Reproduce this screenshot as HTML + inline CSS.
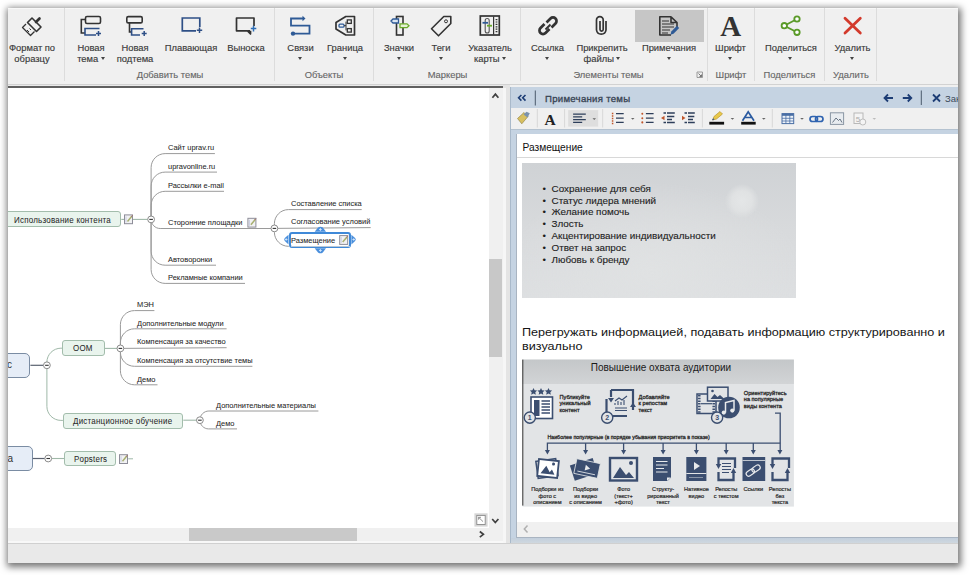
<!DOCTYPE html>
<html><head><meta charset="utf-8">
<style>
*{margin:0;padding:0;box-sizing:border-box}
html,body{width:970px;height:575px;overflow:hidden;background:#fff;font-family:"Liberation Sans",sans-serif}
.a{position:absolute}
#win{position:absolute;left:8px;top:8px;width:950px;height:555px;background:#f0f0f0;box-shadow:1px 2px 7px 2px rgba(0,0,0,.55);overflow:hidden}
.t{position:absolute;white-space:nowrap;line-height:1;text-align:center}
.rt{font-size:9.4px;color:#3a3a3a;-webkit-text-stroke:0.15px #3a3a3a}
.gl{font-size:9.4px;color:#666;-webkit-text-stroke:0.12px #666}
.sep{position:absolute;width:1px;background:#dcdcdc;height:73px}
.arr{position:absolute;width:0;height:0;border-left:2.5px solid transparent;border-right:2.5px solid transparent;border-top:3px solid #444}
svg{position:absolute;overflow:visible}
.mt{font-size:7.9px;color:#1e1e1e;transform:scaleX(0.945);transform-origin:0 0;-webkit-text-stroke:0.05px #1e1e1e}
.tt{font-size:8.4px;color:#2a2a2a;letter-spacing:0.25px;transform:scaleX(0.95);transform-origin:0 0;-webkit-text-stroke:0.05px #2a2a2a}
</style></head><body>
<div id="win"></div>
<div id="clip" style="position:absolute;left:0;top:0;width:970px;height:575px;clip-path:inset(8px 12px 12px 8px)">
<!-- RIBBON -->
<div class="a" style="left:8px;top:8px;width:950px;height:76px;background:#f0f0f0"></div>
<div class="a" style="left:8px;top:83.5px;width:950px;height:1px;background:#d2d2d2"></div>
<div class="a" style="left:8px;top:8px;width:950px;height:1.2px;background:#f8f8f8"></div>
<div class="sep" style="left:64px;top:8px"></div>
<div class="sep" style="left:274px;top:8px"></div>
<div class="sep" style="left:373px;top:8px"></div>
<div class="sep" style="left:520px;top:8px"></div>
<div class="sep" style="left:707px;top:8px"></div>
<div class="sep" style="left:754px;top:8px"></div>
<div class="sep" style="left:824px;top:8px"></div>
<div class="sep" style="left:876px;top:8px"></div>
<div class="a" style="left:635px;top:10px;width:69px;height:32px;background:#c6c6c6"></div>


<svg class="a" style="left:0;top:0" width="970" height="90" viewBox="0 0 970 90">
<!-- format painter -->
<g fill="none" stroke="#333" stroke-width="1.6" stroke-linejoin="round">
 <path d="M27.5 22.5 L32 18 L41 27 L36.5 31.5 Z"/>
 <path d="M26 24 L22.5 27.5 L30.5 35.5 L34.5 31.5" stroke-width="1.3"/>
</g>
<path d="M36 22 L39.5 18.5" stroke="#333" stroke-width="2.6" stroke-linecap="round"/>
<path d="M27 30 L29 32 M29.5 28.5 L31 30" stroke="#333" stroke-width="1"/>
<!-- new topic -->
<rect x="85.5" y="16.5" width="15" height="7" rx="1.5" fill="none" stroke="#333" stroke-width="1.6"/>
<path d="M85.5 19.5 H81.3 V33 H85" fill="none" stroke="#333" stroke-width="1.6"/>
<path d="M99.5 28.5 H85 V35 H96" fill="none" stroke="#2e4f86" stroke-width="1.6"/>
<path d="M98.5 31 V36 M96 33.5 H101" stroke="#2e4f86" stroke-width="1.5"/>
<!-- new subtopic -->
<rect x="126.8" y="16.6" width="15.4" height="6.3" rx="1.5" fill="none" stroke="#333" stroke-width="1.6"/>
<path d="M129.5 22.9 V32 H131.5" fill="none" stroke="#333" stroke-width="1.6"/>
<path d="M143.5 28.8 H131.6 V35 H140" fill="none" stroke="#2e4f86" stroke-width="1.6"/>
<path d="M144.2 31 V36 M141.7 33.5 H146.7" stroke="#2e4f86" stroke-width="1.5"/>
<!-- floating -->
<path d="M196 30.8 H182.3 V18 H199.8 V27" fill="none" stroke="#2e4f86" stroke-width="1.7"/>
<path d="M199.5 27.5 V33 M196.8 30.3 H202.2" stroke="#2e4f86" stroke-width="1.5"/>
<!-- callout -->
<path d="M250 30.8 H247.5 L250.5 34 V30.8 M247 30.8 H236.5 V18 H254 V26" fill="none" stroke="#333" stroke-width="1.7" stroke-linejoin="round"/>
<path d="M253.5 25.8 V31.5 M250.8 28.6 H256.3" stroke="#2e6fb8" stroke-width="1.5"/>
<!-- relationships -->
<g fill="none" stroke="#2e5a96" stroke-width="1.8">
<path d="M303 18.5 H291 V25.7 H309.5 V33.6 H293"/>
</g>
<path d="M302.5 15.8 L305.5 18.5 L302.5 21.2 Z" fill="#2e5a96"/>
<circle cx="293" cy="33.6" r="2.2" fill="#2e5a96"/>
<!-- boundary -->
<path d="M345.8 16.5 H354.5 V35 H345.8 L336 29 V22.5 Z" fill="none" stroke="#333" stroke-width="1.7" stroke-linejoin="round"/>
<rect x="339" y="24.2" width="5" height="3" rx="1" fill="none" stroke="#2e5a96" stroke-width="1.3"/>
<rect x="347.3" y="19.9" width="4" height="3.5" fill="none" stroke="#333" stroke-width="1.3"/>
<rect x="347.3" y="28.6" width="4" height="3.5" fill="none" stroke="#333" stroke-width="1.3"/>
<path d="M344 25.7 H346 M346 21.6 V30.4" stroke="#333" stroke-width="1"/>
<!-- icons (markers) -->
<rect x="396.5" y="16.5" width="6.5" height="18.5" fill="none" stroke="#333" stroke-width="1.6"/>
<path d="M391 21 L393 19 H398.5 V23 H393 Z" fill="#dbe6f3" stroke="#2e5a96" stroke-width="1.3"/>
<path d="M400 23.8 H407 L409 25.7 L407 27.7 H400 Z" fill="#e7f2d5" stroke="#6aaa2a" stroke-width="1.3"/>
<!-- tags -->
<path d="M443.8 16.5 H450.8 V23.5 L438.5 35.8 L431.5 28.8 Z" fill="none" stroke="#333" stroke-width="1.6" stroke-linejoin="round"/>
<circle cx="446" cy="21.3" r="1.5" fill="none" stroke="#333" stroke-width="1"/>
<!-- map index -->
<rect x="480.3" y="16" width="19" height="19" fill="none" stroke="#333" stroke-width="1.7"/>
<path d="M493.6 16.5 V34.5" stroke="#333" stroke-width="1.2"/>
<path d="M496.5 19 V33" stroke="#333" stroke-width="1.8" stroke-dasharray="1.2 1.2"/>
<rect x="485.2" y="18.5" width="4" height="14.5" rx="2" fill="none" stroke="#555" stroke-width="1.1"/>
<path d="M482.5 22.8 H488" stroke="#2e5a96" stroke-width="1.8"/>
<path d="M487 25.7 H492" stroke="#6aaa2a" stroke-width="1.8"/>
<!-- link -->
<g fill="none" stroke="#333" stroke-width="2.7">
<path d="M546.5 22.5 L550.5 18.5 A2.9 2.9 0 0 1 555.5 23.5 L551.5 27.5"/>
<path d="M549.5 29 L545.5 33 A2.9 2.9 0 0 1 540.5 28 L544.5 24"/>
<path d="M545.5 29.5 L550.5 24.5" stroke-width="2"/>
</g>
<!-- paperclip -->
<path d="M606 21 V30 A4.8 4.8 0 0 1 596.5 30 V20 A3.3 3.3 0 0 1 603.2 20 V29.5 A1.5 1.5 0 0 1 600 29.5 V21" fill="none" stroke="#333" stroke-width="1.7"/>
<!-- notes doc -->
<path d="M671 16.8 H659.8 V35 H671 M677 27 V22.5 L671 16.8 V22.5 H677" fill="none" stroke="#333" stroke-width="1.6" stroke-linejoin="round"/>
<path d="M662 21 H669 M662 24 H674 M662 27 H674 M662 30 H670 M662 33 H668" stroke="#333" stroke-width="1"/>
<path d="M670.5 34.8 L671.3 31.5 L677 25.8 L679.2 28 L673.5 33.7 Z" fill="#2e5a96"/>
<!-- font A -->
<text x="730.8" y="36.3" font-family="Liberation Serif" font-weight="bold" font-size="29" text-anchor="middle" fill="#333">A</text>
<!-- share -->
<g fill="#fff" stroke="#5a9a28" stroke-width="1.8">
<path d="M784.3 25.7 L797 19 M784.3 25.7 L797 32.3" fill="none"/>
<circle cx="784.3" cy="25.7" r="2.7"/>
<circle cx="797" cy="19" r="2.7"/>
<circle cx="797" cy="32.3" r="2.7"/>
</g>
<!-- delete -->
<path d="M845 18.3 L860.3 33 M860.3 18.3 L845 33" stroke="#d33a2c" stroke-width="2.8" stroke-linecap="round"/>
<!-- dialog launcher -->
<path d="M697 72 H702.5 V77.5 H697 Z" fill="none" stroke="#888" stroke-width="0.8"/>
<path d="M698.5 73.5 L701.5 76.5 M701.5 74.5 V76.5 H699.5" fill="none" stroke="#666" stroke-width="0.9"/>
</svg>

<!-- ribbon texts: centered at x -->
<div class="t rt" style="left:-18px;width:100px;top:43px">Формат по</div>
<div class="t rt" style="left:-18px;width:100px;top:54px">образцу</div>
<div class="t rt" style="left:41px;width:100px;top:43px">Новая</div>
<div class="t rt" style="left:41px;width:100px;top:54px">тема <span style="display:inline-block;width:0;height:0;border-left:2.5px solid transparent;border-right:2.5px solid transparent;border-top:3px solid #444;vertical-align:2px"></span></div>
<div class="t rt" style="left:85px;width:100px;top:43px">Новая</div>
<div class="t rt" style="left:85px;width:100px;top:54px">подтема</div>
<div class="t rt" style="left:141px;width:100px;top:43px">Плавающая</div>
<div class="t rt" style="left:196px;width:100px;top:43px">Выноска</div>
<div class="t rt" style="left:250.5px;width:100px;top:43px">Связи</div>
<div class="arr" style="left:297.5px;top:57px"></div>
<div class="t rt" style="left:295px;width:100px;top:43px">Граница</div>
<div class="arr" style="left:342.5px;top:57px"></div>
<div class="t rt" style="left:349px;width:100px;top:43px">Значки</div>
<div class="arr" style="left:397px;top:57px"></div>
<div class="t rt" style="left:391px;width:100px;top:43px">Теги</div>
<div class="arr" style="left:438.5px;top:57px"></div>
<div class="t rt" style="left:440px;width:100px;top:43px">Указатель</div>
<div class="t rt" style="left:440px;width:100px;top:54px">карты <span style="display:inline-block;width:0;height:0;border-left:2.5px solid transparent;border-right:2.5px solid transparent;border-top:3px solid #444;vertical-align:2px"></span></div>
<div class="t rt" style="left:497.5px;width:100px;top:43px">Ссылка</div>
<div class="arr" style="left:545px;top:57px"></div>
<div class="t rt" style="left:552px;width:100px;top:43px">Прикрепить</div>
<div class="t rt" style="left:552px;width:100px;top:54px">файлы <span style="display:inline-block;width:0;height:0;border-left:2.5px solid transparent;border-right:2.5px solid transparent;border-top:3px solid #444;vertical-align:2px"></span></div>
<div class="t rt" style="left:619px;width:100px;top:43px">Примечания</div>
<div class="arr" style="left:666.5px;top:57px"></div>
<div class="t rt" style="left:680.5px;width:100px;top:43px">Шрифт</div>
<div class="arr" style="left:728px;top:57px"></div>
<div class="t rt" style="left:741px;width:100px;top:43px">Поделиться</div>
<div class="arr" style="left:788px;top:57px"></div>
<div class="t rt" style="left:802.5px;width:100px;top:43px">Удалить</div>
<div class="arr" style="left:850px;top:57px"></div>

<div class="t gl" style="left:120px;width:100px;top:69.8px">Добавить темы</div>
<div class="t gl" style="left:274px;width:100px;top:69.8px">Объекты</div>
<div class="t gl" style="left:397.5px;width:100px;top:69.8px">Маркеры</div>
<div class="t gl" style="left:558.5px;width:100px;top:69.8px">Элементы темы</div>
<div class="t gl" style="left:681px;width:100px;top:69.8px">Шрифт</div>
<div class="t gl" style="left:739.5px;width:100px;top:69.8px">Поделиться</div>
<div class="t gl" style="left:801px;width:100px;top:69.8px">Удалить</div>

<!-- CANVAS -->
<div class="a" style="left:8px;top:85px;width:495px;height:2px;background:#eaeaea"></div>
<div class="a" style="left:8px;top:86.3px;width:495px;height:1.3px;background:#606060"></div>
<div class="a" style="left:8px;top:87.5px;width:481px;height:441px;background:#fff"></div>
<div class="a" style="left:489px;top:87.5px;width:14px;height:455px;background:#f0f0f0"></div>
<div class="a" style="left:8px;top:528px;width:481px;height:14px;background:#f0f0f0"></div>
<div class="a" style="left:189px;top:528.2px;width:168px;height:12.6px;background:#c9c9c9"></div>
<div class="a" style="left:8px;top:541px;width:495px;height:1.5px;background:#f8f8f8"></div>
<div class="a" style="left:503px;top:85px;width:7px;height:458px;background:#e4e4e4"></div>
<div class="a" style="left:503px;top:87.5px;width:3px;height:455px;background:#f6f6f6"></div>
<div class="a" style="left:489px;top:259.2px;width:13px;height:98.3px;background:#c8c8c8"></div>
<svg class="a" style="left:0;top:0" width="970" height="575" viewBox="0 0 970 575">
<path d="M492.4 97.8 L495.4 94.2 L498.4 97.8" fill="none" stroke="#404040" stroke-width="1.7"/>
<path d="M492.2 519 L495.3 522.5 L498.4 519" fill="none" stroke="#404040" stroke-width="1.7"/>
<path d="M479.8 531.5 L483.4 534.3 L479.8 537.1" fill="none" stroke="#404040" stroke-width="1.7"/>
<rect x="474.4" y="513.3" width="13.2" height="13.3" fill="#d6d6d6"/>
<rect x="476.8" y="515.4" width="8.4" height="9.1" fill="#fff" stroke="#8a8a8a" stroke-width="0.9"/>
<path d="M478.6 517.3 L483 521.6 M478.6 517.3 H481 M478.6 517.3 V519.7" fill="none" stroke="#777" stroke-width="0.8"/>
</svg>
<!--MAP-->
<div class="a" style="left:8px;top:87.5px;width:481px;height:440.5px;overflow:hidden">
<div class="a" style="left:-8px;top:-87.5px;width:970px;height:575px">
<div class="a" style="left:-20px;top:211.1px;width:141.3px;height:16px;background:#e9f4ed;border:1px solid #a3bdac;border-radius:3px"></div>
<div class="a" style="left:62.3px;top:339.9px;width:42.7px;height:16.1px;background:#e9f4ed;border:1px solid #a3bdac;border-radius:3px"></div>
<div class="a" style="left:62.9px;top:413.3px;width:120.4px;height:15.6px;background:#e9f4ed;border:1px solid #a3bdac;border-radius:3px"></div>
<div class="a" style="left:64.1px;top:451.1px;width:52.3px;height:14.9px;background:#e9f4ed;border:1px solid #a3bdac;border-radius:3px"></div>
<div class="a" style="left:-20px;top:352.5px;width:50.4px;height:25px;background:#e6edf7;border:1.3px solid #7a8ca3;border-radius:5px"></div>
<div class="a" style="left:-20px;top:446.2px;width:52.8px;height:24.5px;background:#e6edf7;border:1.3px solid #7a8ca3;border-radius:5px"></div>
<div class="a" style="left:288.5px;top:231.7px;width:62.9px;height:16.5px;background:#fff;border:2.2px solid #3f89d8;border-radius:3px"></div>
<div class="a" style="left:290.5px;top:246px;width:59px;height:0.8px;background:#b8c8d8"></div>
<svg class="a" style="left:0;top:0" width="970" height="575" viewBox="0 0 970 575">
<path d="M151.1 219.4 L151.1 167.6 C151.1 159.9 157.4 153.6 165.1 153.6 L214.9 153.6" stroke="#9a9a9a" stroke-width="1" fill="none"/>
<path d="M151.1 219.4 L151.1 186.1 C151.1 178.4 157.4 172.1 165.1 172.1 L217.0 172.1" stroke="#9a9a9a" stroke-width="1" fill="none"/>
<path d="M151.1 219.4 L151.1 205.3 C151.1 197.60000000000002 157.4 191.3 165.1 191.3 L224.0 191.3" stroke="#9a9a9a" stroke-width="1" fill="none"/>
<path d="M151.1 219.4 L151.1 219.4 C151.1 224.405 155.195 228.5 160.2 228.5 L271.0 228.5" stroke="#9a9a9a" stroke-width="1" fill="none"/>
<path d="M151.1 219.4 L151.1 251.2 C151.1 258.9 157.4 265.2 165.1 265.2 L216.0 265.2" stroke="#9a9a9a" stroke-width="1" fill="none"/>
<path d="M151.1 219.4 L151.1 269.4 C151.1 277.09999999999997 157.4 283.4 165.1 283.4 L245.0 283.4" stroke="#9a9a9a" stroke-width="1" fill="none"/>
<path d="M274.4 228.4 L274.4 223.6 C274.4 215.9 280.7 209.6 288.4 209.6 L361.7 209.6" stroke="#9a9a9a" stroke-width="1" fill="none"/>
<path d="M274.4 228.4 L370.7 227.6" stroke="#9a9a9a" stroke-width="1" fill="none"/>
<path d="M274.4 228.4 L274.4 232.3 C274.4 240.0 280.7 246.3 288.4 246.3 L289 246.3" stroke="#9a9a9a" stroke-width="1" fill="none"/>
<path d="M46.9 365.3 L46.9 362.2 C46.9 354.5 53.199999999999996 348.2 60.9 348.2 L62.3 348.2" stroke="#9fb8a8" stroke-width="1" fill="none"/>
<path d="M46.9 365.3 L46.9 406.4 C46.9 414.09999999999997 53.199999999999996 420.4 60.9 420.4 L62.9 420.4" stroke="#9fb8a8" stroke-width="1" fill="none"/>
<path d="M120.4 348.4 L120.4 324.6 C120.4 316.90000000000003 126.7 310.6 134.4 310.6 L154.4 310.6" stroke="#9a9a9a" stroke-width="1" fill="none"/>
<path d="M120.4 348.4 L120.4 342.8 C120.4 335.1 126.7 328.8 134.4 328.8 L226.6 328.8" stroke="#9a9a9a" stroke-width="1" fill="none"/>
<path d="M120.4 348.4 L226.6 347.7" stroke="#9a9a9a" stroke-width="1" fill="none"/>
<path d="M120.4 348.4 L120.4 352.3 C120.4 360.0 126.7 366.3 134.4 366.3 L252.4 366.3" stroke="#9a9a9a" stroke-width="1" fill="none"/>
<path d="M120.4 348.4 L120.4 370.8 C120.4 378.5 126.7 384.8 134.4 384.8 L157.5 384.8" stroke="#9a9a9a" stroke-width="1" fill="none"/>
<path d="M199.9 420.2 L199.9 420.0 C199.9 415.05 203.95000000000002 411.0 208.9 411.0 L318.4 411.0" stroke="#9a9a9a" stroke-width="1" fill="none"/>
<path d="M199.9 420.2 L199.9 420.2 C199.9 424.98499999999996 203.815 428.9 208.6 428.9 L237.0 428.9" stroke="#9a9a9a" stroke-width="1" fill="none"/>
<path d="M121.3 219.4 H147.7" stroke="#9fb8a8" stroke-width="1.1" fill="none"/>
<path d="M30.4 365.3 H43.5" stroke="#5a6270" stroke-width="1.2" fill="none"/>
<path d="M105 348.4 H117" stroke="#9fb8a8" stroke-width="1.1" fill="none"/>
<path d="M183.3 420.2 H196.5" stroke="#9fb8a8" stroke-width="1.1" fill="none"/>
<path d="M32.8 458.5 H44.8" stroke="#5a6270" stroke-width="1.2" fill="none"/>
<path d="M51.6 458.5 H64.1" stroke="#9fb8a8" stroke-width="1.1" fill="none"/>
<path d="M128.2 458.8 H133" stroke="#9fb8a8" stroke-width="1" fill="none"/>
<circle cx="151.1" cy="219.4" r="3.4" fill="#fff" stroke="#8a8a8a" stroke-width="1"/><path d="M149.29999999999998 219.4 H152.9" stroke="#333" stroke-width="1.1"/>
<circle cx="274.4" cy="228.4" r="3.4" fill="#fff" stroke="#8a8a8a" stroke-width="1"/><path d="M272.59999999999997 228.4 H276.2" stroke="#333" stroke-width="1.1"/>
<circle cx="46.9" cy="365.3" r="3.4" fill="#fff" stroke="#8a8a8a" stroke-width="1"/><path d="M45.1 365.3 H48.699999999999996" stroke="#333" stroke-width="1.1"/>
<circle cx="120.4" cy="348.4" r="3.4" fill="#fff" stroke="#8a8a8a" stroke-width="1"/><path d="M118.60000000000001 348.4 H122.2" stroke="#333" stroke-width="1.1"/>
<circle cx="199.9" cy="420.2" r="3.4" fill="#fff" stroke="#8a8a8a" stroke-width="1"/><path d="M198.1 420.2 H201.70000000000002" stroke="#333" stroke-width="1.1"/>
<circle cx="48.2" cy="458.5" r="3.4" fill="#fff" stroke="#8a8a8a" stroke-width="1"/><path d="M46.400000000000006 458.5 H50.0" stroke="#333" stroke-width="1.1"/>
<g transform="translate(124 214.4)"><rect x="0.5" y="0.5" width="8" height="8.8" fill="#f2f2f4" stroke="#8d8d98" stroke-width="1"/><path d="M2 2 V8" stroke="#c8cce0" stroke-width="1"/><path d="M3.5 7 L7.8 1.8" stroke="#a8b070" stroke-width="1.5"/><path d="M7.3 2.3 L8.5 0.8" stroke="#a06a6a" stroke-width="1"/></g>
<g transform="translate(247.4 217.8)"><rect x="0.5" y="0.5" width="8" height="8.8" fill="#f2f2f4" stroke="#8d8d98" stroke-width="1"/><path d="M2 2 V8" stroke="#c8cce0" stroke-width="1"/><path d="M3.5 7 L7.8 1.8" stroke="#a8b070" stroke-width="1.5"/><path d="M7.3 2.3 L8.5 0.8" stroke="#a06a6a" stroke-width="1"/></g>
<g transform="translate(339.2 235.1)"><rect x="0.5" y="0.5" width="8" height="8.8" fill="#f2f2f4" stroke="#8d8d98" stroke-width="1"/><path d="M2 2 V8" stroke="#c8cce0" stroke-width="1"/><path d="M3.5 7 L7.8 1.8" stroke="#a8b070" stroke-width="1.5"/><path d="M7.3 2.3 L8.5 0.8" stroke="#a06a6a" stroke-width="1"/></g>
<g transform="translate(119 454.2)"><rect x="0.5" y="0.5" width="8" height="8.8" fill="#f2f2f4" stroke="#8d8d98" stroke-width="1"/><path d="M2 2 V8" stroke="#c8cce0" stroke-width="1"/><path d="M3.5 7 L7.8 1.8" stroke="#a8b070" stroke-width="1.5"/><path d="M7.3 2.3 L8.5 0.8" stroke="#a06a6a" stroke-width="1"/></g>
<path d="M314.7 231.7 L318 227.5 Q320.4 225.8 322.8 227.5 L326 231.7 Z" fill="#4a8fdc"/>
<path d="M314.7 248.2 L318 252.4 Q320.4 254.1 322.8 252.4 L326 248.2 Z" fill="#4a8fdc"/>
<path d="M288.5 234.7 L284.8 238 Q283.4 239.5 284.8 241 L288.5 244.4 Z" fill="#4a8fdc"/>
<path d="M351.4 234.7 L355.1 238 Q356.5 239.5 355.1 241 L351.4 244.4 Z" fill="#4a8fdc"/>
<path d="M320.4 228 V231 M319 229.5 H321.8 M320.4 249 V252 M319 250.5 H321.8 M286.2 238.2 V240.8 M284.9 239.5 H287.5 M353.7 238.2 V240.8 M352.4 239.5 H355 " stroke="#dcecff" stroke-width="0.8"/>
</svg>
<div class="t mt" style="left:168.2px;top:144.3px;text-align:left">Сайт uprav.ru</div>
<div class="t mt" style="left:168.2px;top:162.8px;text-align:left">upravonline.ru</div>
<div class="t mt" style="left:168.2px;top:182.0px;text-align:left">Рассылки e-mail</div>
<div class="t mt" style="left:168.2px;top:219.2px;text-align:left">Сторонние площадки</div>
<div class="t mt" style="left:168.2px;top:255.9px;text-align:left">Автоворонки</div>
<div class="t mt" style="left:168.2px;top:274.1px;text-align:left">Рекламные компании</div>
<div class="t mt" style="left:291.1px;top:200.3px;text-align:left">Составление списка</div>
<div class="t mt" style="left:291.1px;top:217.9px;text-align:left">Согласование условий</div>
<div class="t mt" style="left:136.9px;top:301.3px;text-align:left">МЭН</div>
<div class="t mt" style="left:136.9px;top:319.5px;text-align:left">Дополнительные модули</div>
<div class="t mt" style="left:136.9px;top:338.4px;text-align:left">Компенсация за качество</div>
<div class="t mt" style="left:136.9px;top:357.0px;text-align:left">Компенсация за отсутствие темы</div>
<div class="t mt" style="left:136.9px;top:375.5px;text-align:left">Демо</div>
<div class="t mt" style="left:216.3px;top:401.7px;text-align:left">Дополнительные материалы</div>
<div class="t mt" style="left:216.3px;top:419.6px;text-align:left">Демо</div>
<div class="t tt" style="left:13.5px;top:215.8px;text-align:left">Использование контента</div>
<div class="t tt" style="left:73px;top:344.4px;text-align:left">ООМ</div>
<div class="t tt" style="left:72.7px;top:416.9px;text-align:left">Дистанционное обучение</div>
<div class="t tt" style="left:74px;top:454.6px;text-align:left">Popsters</div>
<div class="t" style="left:7px;top:360px;font-size:10px;color:#333;text-align:left">с</div>
<div class="t" style="left:3px;top:453.5px;font-size:10px;color:#333;text-align:left">ка</div>
<div class="t mt" style="left:291.4px;top:236.9px;text-align:left">Размещение</div>
</div></div>
<!--/MAP-->
<!-- status bar -->
<div class="a" style="left:8px;top:542.5px;width:950px;height:1px;background:#d0d0d0"></div>
<div class="a" style="left:8px;top:543.5px;width:950px;height:20px;background:#e9e9e9"></div>

<!-- NOTES PANEL -->
<div class="a" style="left:510px;top:87px;width:448px;height:456px;background:#c5d3e2"></div>
<div class="a" style="left:510px;top:87px;width:1px;height:456px;background:#a9b9ca"></div>
<div class="a" style="left:511px;top:108px;width:447px;height:21px;background:#f0f0f0"></div>
<div class="a" style="left:511px;top:128.5px;width:447px;height:1px;background:#b4c2d0"></div>
<div class="a" style="left:516.5px;top:134px;width:442px;height:403px;background:#fff"></div>
<div class="a" style="left:516.5px;top:522px;width:442px;height:15px;background:#f0f0f0"></div>
<div class="a" style="left:516px;top:134px;width:1px;height:403.5px;background:#a9b4c1"></div>
<div class="a" style="left:516px;top:536.6px;width:442px;height:1px;background:#a9b4c1"></div>
<div class="a" style="left:511px;top:537.6px;width:447px;height:5px;background:linear-gradient(#c2cfdc,#cfd7df)"></div>
<div class="t" style="left:545px;top:93.6px;font-size:9.6px;letter-spacing:0.28px;-webkit-text-stroke:0.35px #3a4656;color:#3a4656;text-align:left">Примечания темы</div>
<div class="t" style="left:522.5px;top:142.6px;font-size:10.2px;color:#111;text-align:left">Размещение</div>
<div class="a" style="left:516.5px;top:157px;width:442px;height:1px;background:#d8d8d8"></div>


<svg class="a" style="left:0;top:0" width="970" height="140" viewBox="0 0 970 140">
<!-- header -->
<path d="M527.5 525.5 L524.3 529 L527.5 532.5" fill="none" stroke="#b0b0b0" stroke-width="1.5"/>
<path d="M521.4 95 L518.6 97.8 L521.4 100.6 M525.5 95 L522.7 97.8 L525.5 100.6" fill="none" stroke="#1d3d75" stroke-width="1.6"/>
<path d="M535.3 90.5 V105.5" stroke="#4a5a6c" stroke-width="1"/>
<path d="M893 98 H884.5 M888 94.5 L884.5 98 L888 101.5" fill="none" stroke="#1d3d75" stroke-width="1.8"/>
<path d="M902.8 98 H911.3 M907.8 94.5 L911.3 98 L907.8 101.5" fill="none" stroke="#1d3d75" stroke-width="1.8"/>
<path d="M921.3 90.5 V105" stroke="#4a5a6c" stroke-width="1"/>
<path d="M933 94.5 L940 101.5 M940 94.5 L933 101.5" stroke="#1d3d75" stroke-width="1.8"/>
<!-- toolbar separators -->
<path d="M537.3 109 V127.5 M564.6 109 V127.5 M602.7 109 V127.5 M702.4 109 V127.5 M772.3 109 V127.5" stroke="#d8d8d8" stroke-width="1"/>
<!-- brush -->
<path d="M517.5 118.5 L524 112.5 L528 116.5 L521.8 123.8 Z" fill="#d8c060" stroke="#8a7a3a" stroke-width="0.6"/>
<path d="M523.5 114.5 L526.5 111.8 L529.8 113.2 L527.5 117.5 Z" fill="#7b93ad"/>
<!-- A -->
<text x="550" y="124.6" font-family="Liberation Serif" font-weight="bold" font-size="15.5" text-anchor="middle" fill="#222">A</text>
<!-- align highlight -->
<rect x="568.2" y="110.1" width="30" height="16.5" fill="#dedede"/>
<path d="M573.1 114.2 H585.8 M573.1 116.9 H582.2 M573.1 119.6 H585.8 M573.1 122.3 H582.2" stroke="#2d3e5a" stroke-width="1.2"/>
<path d="M592.5 118.3 L596 118.3 L594.25 120 Z" fill="#666"/>
<!-- numbered list -->
<path d="M612.6 112.8 V124.6" stroke="#c0552a" stroke-width="1.5" stroke-dasharray="1.4 1.1"/>
<path d="M616 113.7 H623.7 M616 118.2 H623.7 M616 122.3 H623.7" stroke="#2d3e5a" stroke-width="1.2"/>
<path d="M631 118 L634.5 118 L632.75 119.8 Z" fill="#666"/>
<!-- bullet list -->
<path d="M642.3 113.7 V113.8 M642.3 118.2 V118.3 M642.3 122.3 V122.4" stroke="#c0552a" stroke-width="2" stroke-linecap="round"/>
<path d="M645.9 113.7 H653.6 M645.9 118.2 H653.6 M645.9 122.3 H653.6" stroke="#2d3e5a" stroke-width="1.2"/>
<!-- outdent -->
<path d="M663.5 113 H666 M667 113 H674.8 M667 116.5 H674.3 M667 119.5 H672 M663.5 122.5 H666 M667 122.5 H674.8" stroke="#2d3e5a" stroke-width="1.3"/>
<path d="M661 118 L664.5 115.8 V120.2 Z" fill="#c0552a"/>
<!-- indent -->
<path d="M684.5 113 H687 M688 113 H694.8 M688 116.5 H694.3 M688 119.5 H693 M684.5 122.5 H687 M688 122.5 H694.8" stroke="#2d3e5a" stroke-width="1.3"/>
<path d="M685.5 118 L682 115.8 V120.2 Z" fill="#c0552a"/>
<!-- highlighter -->
<path d="M712.5 120 L714 116.5 L720 111.5 L722.5 114 L716.5 119 Z" fill="#e8c84a" stroke="#b08a20" stroke-width="0.6"/>
<path d="M712.5 120 L714 118.8" stroke="#3a5a90" stroke-width="1.2"/>
<rect x="709.3" y="121.8" width="14.8" height="2.8" fill="#111"/>
<path d="M730.6 118 L734.2 118 L732.4 119.8 Z" fill="#666"/>
<!-- font color -->
<path d="M742.5 120.8 L748.2 111.8 L754 120.8 M744.8 117.5 H751.7" fill="none" stroke="#2a5aa0" stroke-width="1.7"/>
<rect x="741.2" y="121.8" width="14.5" height="2.8" fill="#111"/>
<path d="M762 118 L765.6 118 L763.8 119.8 Z" fill="#666"/>
<!-- table -->
<rect x="782" y="113.6" width="11.7" height="10" fill="#eef3fa" stroke="#4a6fa5" stroke-width="1"/>
<rect x="782" y="113.6" width="11.7" height="2.2" fill="#4a6fa5"/>
<path d="M782 118.3 H793.7 M782 121 H793.7 M785.9 113.6 V123.6 M789.8 113.6 V123.6" stroke="#4a6fa5" stroke-width="0.8"/>
<path d="M800.2 118 L803.8 118 L802 119.8 Z" fill="#666"/>
<!-- link -->
<rect x="810" y="116.5" width="7.5" height="5" rx="2.5" fill="none" stroke="#2f63b0" stroke-width="1.7"/>
<rect x="815.5" y="116.5" width="7.5" height="5" rx="2.5" fill="none" stroke="#2f63b0" stroke-width="1.7"/>
<!-- image -->
<rect x="830.4" y="112.8" width="13.2" height="11.6" fill="#e8ecf0" stroke="#8a96a4" stroke-width="1"/>
<path d="M832.5 122.5 L836 118 L838.5 120.5 L840 119 L842 122.5" fill="none" stroke="#5a6878" stroke-width="0.9"/>
<!-- disabled -->
<rect x="854" y="113" width="9" height="10.5" fill="#f4f4f4" stroke="#b8b8b8" stroke-width="1"/>
<text x="858" y="121.5" font-family="Liberation Sans" font-size="8" text-anchor="middle" fill="#aaa">5</text>
<circle cx="862.8" cy="122" r="3" fill="#f4f4f4" stroke="#b8b8b8" stroke-width="0.9"/>
<path d="M872.5 118 L876.1 118 L874.3 119.8 Z" fill="#bbb"/>
</svg>

<div class="t" style="left:945px;top:94px;font-size:9.5px;color:#3e4b5b;text-align:left">Закрыть</div>
<!--NOTES-->
<div class="a" style="left:521.8px;top:162.8px;width:274.4px;height:135px;background:radial-gradient(circle at 220px 38px,#e4e6e7 0,#e0e2e3 10px,rgba(220,222,224,0) 17px),radial-gradient(ellipse 150px 90px at 130px 110px,#e0e2e3 0,rgba(224,226,227,0) 100%),linear-gradient(180deg,#cfd2d5 0,#d8dadc 50%,#dddfe1 100%)"></div>
<div class="t" style="left:542.6px;top:183.6px;font-size:9.9px;color:#1e1e1e;text-align:left">•</div>
<div class="t" style="left:551.5px;top:183.8px;font-size:9.9px;color:#222;-webkit-text-stroke:0.12px #222;text-align:left">Сохранение для себя</div>
<div class="t" style="left:542.6px;top:195.5px;font-size:9.9px;color:#1e1e1e;text-align:left">•</div>
<div class="t" style="left:551.5px;top:195.7px;font-size:9.9px;color:#222;-webkit-text-stroke:0.12px #222;text-align:left">Статус лидера мнений</div>
<div class="t" style="left:542.6px;top:207.2px;font-size:9.9px;color:#1e1e1e;text-align:left">•</div>
<div class="t" style="left:551.5px;top:207.4px;font-size:9.9px;color:#222;-webkit-text-stroke:0.12px #222;text-align:left">Желание помочь</div>
<div class="t" style="left:542.6px;top:219.2px;font-size:9.9px;color:#1e1e1e;text-align:left">•</div>
<div class="t" style="left:551.5px;top:219.4px;font-size:9.9px;color:#222;-webkit-text-stroke:0.12px #222;text-align:left">Злость</div>
<div class="t" style="left:542.6px;top:230.9px;font-size:9.9px;color:#1e1e1e;text-align:left">•</div>
<div class="t" style="left:551.5px;top:231.1px;font-size:9.9px;color:#222;-webkit-text-stroke:0.12px #222;text-align:left">Акцентирование индивидуальности</div>
<div class="t" style="left:542.6px;top:242.8px;font-size:9.9px;color:#1e1e1e;text-align:left">•</div>
<div class="t" style="left:551.5px;top:243.0px;font-size:9.9px;color:#222;-webkit-text-stroke:0.12px #222;text-align:left">Ответ на запрос</div>
<div class="t" style="left:542.6px;top:254.7px;font-size:9.9px;color:#1e1e1e;text-align:left">•</div>
<div class="t" style="left:551.5px;top:254.9px;font-size:9.9px;color:#222;-webkit-text-stroke:0.12px #222;text-align:left">Любовь к бренду</div>
<div class="t" style="left:521.8px;top:327.1px;font-size:10.6px;transform:scaleX(1.19);transform-origin:0 0;color:#151515;text-align:left">Перегружать информацией, подавать информацию структурированно и</div>
<div class="t" style="left:521.8px;top:340.6px;font-size:10.6px;transform:scaleX(1.19);transform-origin:0 0;color:#151515;text-align:left">визуально</div>
<svg class="a" style="left:0;top:0" width="970" height="575" viewBox="0 0 970 575">
<defs><linearGradient id="hb" x1="0" y1="0" x2="0" y2="1"><stop offset="0" stop-color="#c4c7c9"/><stop offset="1" stop-color="#d2d4d6"/></linearGradient></defs>
<rect x="522.5" y="359.6" width="271.4" height="147" fill="#e2e4e6"/>
<rect x="522.5" y="359.6" width="271.4" height="24.4" fill="url(#hb)"/>
<rect x="522.3" y="359.6" width="1" height="146" fill="#333"/>
<text x="590.8" y="370.8" font-family="Liberation Sans" font-size="10" fill="#1a1a1a">Повышение охвата аудитории</text>
<path d="M533.5 388 l1.1 2.3 2.5 .3 -1.8 1.7 .5 2.5 -2.3 -1.2 -2.3 1.2 .5 -2.5 -1.8 -1.7 2.5 -.3z" fill="#3b4e70"/>
<path d="M541 388 l1.1 2.3 2.5 .3 -1.8 1.7 .5 2.5 -2.3 -1.2 -2.3 1.2 .5 -2.5 -1.8 -1.7 2.5 -.3z" fill="#3b4e70"/>
<path d="M548.5 388 l1.1 2.3 2.5 .3 -1.8 1.7 .5 2.5 -2.3 -1.2 -2.3 1.2 .5 -2.5 -1.8 -1.7 2.5 -.3z" fill="#3b4e70"/>
<rect x="531" y="397" width="21.5" height="21.5" fill="#fff" stroke="#3b4e70" stroke-width="1.6"/>
<rect x="534" y="400" width="5.5" height="16" fill="#3b4e70"/>
<path d="M541.5 401 H550 M541.5 404 H550 M541.5 407 H550 M541.5 410 H550 M541.5 413 H550" stroke="#3b4e70" stroke-width="1.3"/>
<circle cx="529.8" cy="417.6" r="5.6" fill="#e2e4e6" stroke="#3b4e70" stroke-width="1.4"/><text x="529.8" y="420.2" font-family="Liberation Sans" font-size="7" font-weight="bold" text-anchor="middle" fill="#3b4e70">1</text>
<text x="559.5" y="398.8" font-family="Liberation Sans" font-size="5.6" text-anchor="start" fill="#2a2a2a" stroke="#2a2a2a" stroke-width="0.28">Публикуйте</text><text x="559.5" y="405.4" font-family="Liberation Sans" font-size="5.6" text-anchor="start" fill="#2a2a2a" stroke="#2a2a2a" stroke-width="0.28">уникальный</text><text x="559.5" y="412.0" font-family="Liberation Sans" font-size="5.6" text-anchor="start" fill="#2a2a2a" stroke="#2a2a2a" stroke-width="0.28">контент</text>
<path d="M611 390 H633 V410 M606.5 399 V416 H627" fill="none" stroke="#3b4e70" stroke-width="2.2"/>
<path d="M608 398 L611 402.5 L614 398 Z M630 407 L633 402.5 L636 407 Z" fill="#3b4e70"/>
<path d="M611 390 V397" stroke="#3b4e70" stroke-width="2.2"/>
<path d="M615 401 L619 398 L622 400 L627 396 M615 405 V403 M618 405 V401 M621 405 V402 M624 405 V400 M615 408 H627 M615 410.5 H627" fill="none" stroke="#3b4e70" stroke-width="1.1"/>
<circle cx="607.2" cy="417.6" r="5.6" fill="#e2e4e6" stroke="#3b4e70" stroke-width="1.4"/><text x="607.2" y="420.2" font-family="Liberation Sans" font-size="7" font-weight="bold" text-anchor="middle" fill="#3b4e70">2</text>
<text x="638.6" y="398.8" font-family="Liberation Sans" font-size="5.6" text-anchor="start" fill="#2a2a2a" stroke="#2a2a2a" stroke-width="0.28">Добавляйте</text><text x="638.6" y="405.4" font-family="Liberation Sans" font-size="5.6" text-anchor="start" fill="#2a2a2a" stroke="#2a2a2a" stroke-width="0.28">к репостам</text><text x="638.6" y="412.0" font-family="Liberation Sans" font-size="5.6" text-anchor="start" fill="#2a2a2a" stroke="#2a2a2a" stroke-width="0.28">текст</text>
<rect x="697" y="394" width="19" height="19.5" fill="#e2e4e6" stroke="#3b4e70" stroke-width="1.5"/>
<path d="M699.3 395 V413 M713.7 395 V413" stroke="#3b4e70" stroke-width="2.5" stroke-dasharray="1.5 1.2"/>
<path d="M701 403.7 H712" stroke="#3b4e70" stroke-width="1.2"/>
<rect x="707.5" y="387.2" width="20.5" height="13.8" fill="#e2e4e6" stroke="#3b4e70" stroke-width="1.5"/>
<path d="M710.5 399 L714.5 394 L717.5 397 L720 395 L724.5 399 Z" fill="#3b4e70"/><circle cx="712.5" cy="391" r="1.3" fill="#3b4e70"/>
<circle cx="729" cy="407.5" r="10.8" fill="#3b4e70"/>
<path d="M725.5 412.5 V402.5 L734 400.5 V410.5" fill="none" stroke="#e8eaec" stroke-width="1.5"/><circle cx="723.8" cy="412.6" r="2.1" fill="#e8eaec"/><circle cx="732.3" cy="410.6" r="2.1" fill="#e8eaec"/>
<circle cx="717.1" cy="417.6" r="5.6" fill="#e2e4e6" stroke="#3b4e70" stroke-width="1.4"/><text x="717.1" y="420.2" font-family="Liberation Sans" font-size="7" font-weight="bold" text-anchor="middle" fill="#3b4e70">3</text>
<text x="743.8" y="394.6" font-family="Liberation Sans" font-size="5.6" text-anchor="start" fill="#2a2a2a" stroke="#2a2a2a" stroke-width="0.28">Ориентируйтесь</text><text x="743.8" y="401.2" font-family="Liberation Sans" font-size="5.6" text-anchor="start" fill="#2a2a2a" stroke="#2a2a2a" stroke-width="0.28">на популярные</text><text x="743.8" y="407.8" font-family="Liberation Sans" font-size="5.6" text-anchor="start" fill="#2a2a2a" stroke="#2a2a2a" stroke-width="0.28">виды контента</text>
<path d="M775 413.2 H780.2 V452" fill="none" stroke="#3b4e70" stroke-width="1.3"/>
<text x="547.4" y="439.3" font-family="Liberation Sans" font-size="5.3" text-anchor="start" fill="#2a2a2a" stroke="#2a2a2a" stroke-width="0.28">Наиболее популярные (в порядке убывания приоритета в показе)</text>
<path d="M547.4 451 V443.1 H780.2" fill="none" stroke="#3b4e70" stroke-width="1.3"/>
<path d="M544.9 450 L549.9 450 L547.4 454.5 Z" fill="#3b4e70"/>
<path d="M585.6 443.1 V451" stroke="#3b4e70" stroke-width="1.3"/>
<path d="M583.1 450 L588.1 450 L585.6 454.5 Z" fill="#3b4e70"/>
<path d="M623.6 443.1 V451" stroke="#3b4e70" stroke-width="1.3"/>
<path d="M621.1 450 L626.1 450 L623.6 454.5 Z" fill="#3b4e70"/>
<path d="M663.1 443.1 V451" stroke="#3b4e70" stroke-width="1.3"/>
<path d="M660.6 450 L665.6 450 L663.1 454.5 Z" fill="#3b4e70"/>
<path d="M696.4 443.1 V451" stroke="#3b4e70" stroke-width="1.3"/>
<path d="M693.9 450 L698.9 450 L696.4 454.5 Z" fill="#3b4e70"/>
<path d="M726.2 443.1 V451" stroke="#3b4e70" stroke-width="1.3"/>
<path d="M723.7 450 L728.7 450 L726.2 454.5 Z" fill="#3b4e70"/>
<path d="M753.3 443.1 V451" stroke="#3b4e70" stroke-width="1.3"/>
<path d="M750.8 450 L755.8 450 L753.3 454.5 Z" fill="#3b4e70"/>
<path d="M777.4 450 L782.4 450 L779.9 454.5 Z" fill="#3b4e70"/>
<g transform="rotate(-8 547 469)"><rect x="537" y="460" width="20" height="17" fill="#e2e4e6" stroke="#3b4e70" stroke-width="1.5"/></g>
<g transform="rotate(6 548 469)"><rect x="538" y="460" width="20" height="17" fill="#fff" stroke="#3b4e70" stroke-width="1.8"/><path d="M541 474 L546 466 L550 472 L552 469 L555 474 Z" fill="#3b4e70"/><circle cx="553" cy="463.5" r="1.5" fill="#3b4e70"/></g>
<g transform="rotate(-18 585 470)"><rect x="572" y="461" width="24" height="16" fill="#3b4e70"/></g>
<g transform="rotate(12 587 469)"><rect x="575" y="461" width="24" height="15" fill="#3b4e70" stroke="#e2e4e6" stroke-width="0.8"/><path d="M585 465 L590 468 L585 471 Z" fill="#e8eaec"/><path d="M578 473 H596" stroke="#e8eaec" stroke-width="0.8"/></g>
<rect x="610" y="458" width="27" height="22.5" fill="#e4e6e8" stroke="#3b4e70" stroke-width="2.4"/>
<path d="M613 478 L620 467 L626 475 L629 472 L634 478 Z" fill="#3b4e70"/><circle cx="631" cy="463" r="2" fill="#3b4e70"/>
<path d="M653 457 H671 V477.5 L667.5 481 H653 Z" fill="#3b4e70"/><path d="M656 461.5 H667.5 M656 465 H667.5 M656 468.5 H664 M656 472 H667.5" stroke="#e8eaec" stroke-width="1"/><path d="M667 481 V477.5 H671" fill="#e8eaec"/>
<rect x="686.3" y="457" width="20.1" height="24" fill="#3b4e70"/><path d="M694 462 L700 466 L694 470 Z" fill="#e8eaec"/><path d="M686.3 473.5 H706.4" stroke="#e2e4e6" stroke-width="1"/><path d="M689 477.5 H703" stroke="#8a96a8" stroke-width="1"/>
<path d="M718.5 465 V458.5 H735 V468 M733.5 473 V480 H718.5 V472" fill="none" stroke="#3b4e70" stroke-width="2.3"/><path d="M715.8 464 L721.2 464 L718.5 469 Z M730.8 473 L736.2 473 L733.5 468 Z" fill="#3b4e70"/><path d="M722 463.5 H731 M722 466.5 H731 M722 469.5 H731 M722 472.5 H729" stroke="#3b4e70" stroke-width="1.1"/>
<rect x="742.5" y="457" width="22.7" height="24" fill="#3b4e70"/><path d="M742.5 460.5 H765.2" stroke="#e2e4e6" stroke-width="0.8"/><g transform="rotate(-35 754 470)" fill="none" stroke="#e8eaec" stroke-width="1.2"><rect x="745" y="467.5" width="9" height="5" rx="2.5"/><rect x="752" y="467.5" width="9" height="5" rx="2.5"/></g>
<path d="M772.5 465 V458.5 H789 V468 M787.5 473 V480 H772.5 V472" fill="none" stroke="#3b4e70" stroke-width="2.3"/><path d="M769.8 464 L775.2 464 L772.5 469 Z M784.8 473 L790.2 473 L787.5 468 Z" fill="#3b4e70"/>
<text x="547.4" y="491.2" font-family="Liberation Sans" font-size="5.6" text-anchor="middle" fill="#2a2a2a" stroke="#2a2a2a" stroke-width="0.2">Подборки из</text><text x="547.4" y="497.6" font-family="Liberation Sans" font-size="5.6" text-anchor="middle" fill="#2a2a2a" stroke="#2a2a2a" stroke-width="0.2">фото с</text><text x="547.4" y="504.0" font-family="Liberation Sans" font-size="5.6" text-anchor="middle" fill="#2a2a2a" stroke="#2a2a2a" stroke-width="0.2">описанием</text>
<text x="585.6" y="491.2" font-family="Liberation Sans" font-size="5.6" text-anchor="middle" fill="#2a2a2a" stroke="#2a2a2a" stroke-width="0.2">Подборки</text><text x="585.6" y="497.6" font-family="Liberation Sans" font-size="5.6" text-anchor="middle" fill="#2a2a2a" stroke="#2a2a2a" stroke-width="0.2">из видео</text><text x="585.6" y="504.0" font-family="Liberation Sans" font-size="5.6" text-anchor="middle" fill="#2a2a2a" stroke="#2a2a2a" stroke-width="0.2">с описанием</text>
<text x="623.6" y="491.2" font-family="Liberation Sans" font-size="5.6" text-anchor="middle" fill="#2a2a2a" stroke="#2a2a2a" stroke-width="0.2">Фото</text><text x="623.6" y="497.6" font-family="Liberation Sans" font-size="5.6" text-anchor="middle" fill="#2a2a2a" stroke="#2a2a2a" stroke-width="0.2">(текст+</text><text x="623.6" y="504.0" font-family="Liberation Sans" font-size="5.6" text-anchor="middle" fill="#2a2a2a" stroke="#2a2a2a" stroke-width="0.2">+фото)</text>
<text x="663.1" y="491.2" font-family="Liberation Sans" font-size="5.6" text-anchor="middle" fill="#2a2a2a" stroke="#2a2a2a" stroke-width="0.2">Структу-</text><text x="663.1" y="497.6" font-family="Liberation Sans" font-size="5.6" text-anchor="middle" fill="#2a2a2a" stroke="#2a2a2a" stroke-width="0.2">рированный</text><text x="663.1" y="504.0" font-family="Liberation Sans" font-size="5.6" text-anchor="middle" fill="#2a2a2a" stroke="#2a2a2a" stroke-width="0.2">текст</text>
<text x="696.4" y="491.2" font-family="Liberation Sans" font-size="5.6" text-anchor="middle" fill="#2a2a2a" stroke="#2a2a2a" stroke-width="0.2">Нативное</text><text x="696.4" y="497.6" font-family="Liberation Sans" font-size="5.6" text-anchor="middle" fill="#2a2a2a" stroke="#2a2a2a" stroke-width="0.2">видео</text>
<text x="726.2" y="491.2" font-family="Liberation Sans" font-size="5.6" text-anchor="middle" fill="#2a2a2a" stroke="#2a2a2a" stroke-width="0.2">Репосты</text><text x="726.2" y="497.6" font-family="Liberation Sans" font-size="5.6" text-anchor="middle" fill="#2a2a2a" stroke="#2a2a2a" stroke-width="0.2">с текстом</text>
<text x="753.3" y="491.2" font-family="Liberation Sans" font-size="5.6" text-anchor="middle" fill="#2a2a2a" stroke="#2a2a2a" stroke-width="0.2">Ссылки</text>
<text x="779.9" y="491.2" font-family="Liberation Sans" font-size="5.6" text-anchor="middle" fill="#2a2a2a" stroke="#2a2a2a" stroke-width="0.2">Репосты</text><text x="779.9" y="497.6" font-family="Liberation Sans" font-size="5.6" text-anchor="middle" fill="#2a2a2a" stroke="#2a2a2a" stroke-width="0.2">без</text><text x="779.9" y="504.0" font-family="Liberation Sans" font-size="5.6" text-anchor="middle" fill="#2a2a2a" stroke="#2a2a2a" stroke-width="0.2">текста</text>
</svg>
<!--/NOTES-->
</div>
</body></html>
